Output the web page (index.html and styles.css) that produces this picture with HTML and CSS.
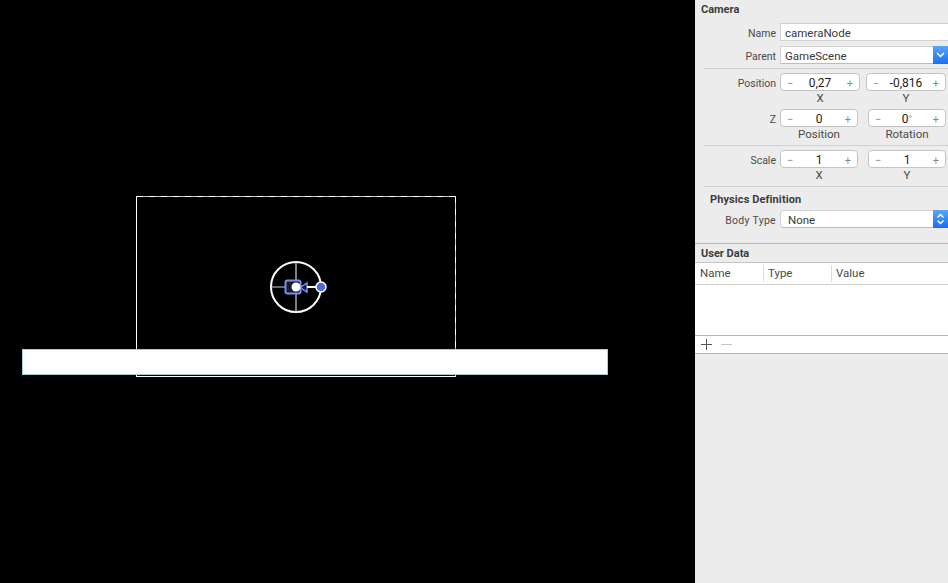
FILE: index.html
```html
<!DOCTYPE html>
<html lang="en">

<head>
  <meta charset="UTF-8" />
  <title>GameScene</title>
  <link rel="stylesheet" href="styles.css">
</head>

<body>
  <div class="scene">
    <div class="camera-frame"></div>
    <div class="ground"></div>
    <svg class="camera-node" width="66" height="60" viewBox="0 0 66 60">
      <circle cx="26" cy="26" r="25" fill="none" stroke="#fff" stroke-width="2" />
      <path d="M1 26H51M26 1V51" stroke="#d0d0d0" stroke-width="1.2" />
      <rect x="15.500" y="19.500" width="15" height="13" rx="2" fill="#1a1a2a" stroke="#7b8fe8" stroke-width="2" />
      <path d="M31 26L37 22V31L31 27Z" fill="#1a1a2a" stroke="#7b8fe8" stroke-width="1.500" />
      <path d="M37 26H46" stroke="#fff" stroke-width="2" />
      <circle cx="26" cy="26" r="4.500" fill="#fff" />
      <circle cx="51" cy="26" r="5" fill="#4f68dc" stroke="#fff" stroke-width="1.500" />
    </svg>
  </div>

  <aside class="inspector">
    <h2 class="section-title">Camera</h2>
    <div class="row row-name">
      <span class="row-label">Name</span>
      <div class="field">cameraNode</div>
    </div>
    <div class="row row-parent">
      <span class="row-label">Parent</span>
      <div class="select">
        GameScene
        <span class="select-arrow">
          <svg width="9" height="6" viewBox="0 0 9 6"><path d="M1 1L4.500 4.500L8 1" fill="none" stroke="#fff" stroke-width="1.500" /></svg>
        </span>
      </div>
    </div>

    <div class="group">
      <div class="row">
        <span class="row-label">Position</span>
        <div class="stepper wide"><i>−</i><b>0,27</b><i>+</i></div>
        <div class="stepper wide"><i>−</i><b>-0,816</b><i>+</i></div>
      </div>
      <div class="captions wide-captions"><span>X</span><span>Y</span></div>
    </div>

    <div class="group-z">
      <div class="row">
        <span class="row-label">Z</span>
        <div class="stepper"><i>−</i><b>0</b><i>+</i></div>
        <div class="stepper"><i>−</i><b>0<small>°</small></b><i>+</i></div>
      </div>
      <div class="captions"><span>Position</span><span>Rotation</span></div>
    </div>

    <div class="group">
      <div class="row">
        <span class="row-label">Scale</span>
        <div class="stepper"><i>−</i><b>1</b><i>+</i></div>
        <div class="stepper"><i>−</i><b>1</b><i>+</i></div>
      </div>
      <div class="captions"><span>X</span><span>Y</span></div>
    </div>

    <div class="group group-physics">
      <h3 class="sub-title">Physics Definition</h3>
      <div class="row">
        <span class="row-label body-type">Body Type</span>
        <div class="select select-round">
          None
          <span class="select-arrow">
            <svg width="9" height="12" viewBox="0 0 9 12"><path d="M1.500 4.500L4.500 1.500L7.500 4.500M1.500 7.500L4.500 10.500L7.500 7.500" fill="none" stroke="#fff" stroke-width="1.500" /></svg>
          </span>
        </div>
      </div>
    </div>

    <div class="user-data">
      <h2 class="section-title">User Data</h2>
      <div class="table-head">
        <span>Name</span>
        <span>Type</span>
        <span>Value</span>
      </div>
      <div class="table-body"></div>
      <div class="table-foot">
        <svg width="48" height="17" viewBox="0 0 48 17">
          <path d="M6 8.500H17M11.500 3V14" stroke="#555" stroke-width="1" />
          <path d="M26 8.500H37" stroke="#c4c4c4" stroke-width="1" />
        </svg>
      </div>
    </div>
  </aside>
</body>

</html>
```

FILE: styles.css
```css
* {
  box-sizing: border-box;
}

body {
  margin: 0;
  width: 948px;
  height: 583px;
  overflow: hidden;
  display: flex;
  font-family: 'Roboto', sans-serif;
  font-size: 10.5px;
  color: #3a3a3a;
  background-color: #ececec;
}

.scene {
  position: relative;
  width: 695px;
  height: 583px;
  background: #000;
}

.camera-frame {
  position: absolute;
  left: 136px;
  top: 196px;
  width: 320px;
  height: 181px;
  border: 1px solid #fff;
  border-top-color: #c4c4c4;
  border-right-color: #c4c4c4;
}

.camera-frame::before {
  content: '';
  position: absolute;
  left: 0;
  right: 0;
  top: -1px;
  height: 1px;
  background: repeating-linear-gradient(90deg, #fff 0 6px, transparent 6px 12px);
}

.camera-frame::after {
  content: '';
  position: absolute;
  top: 0;
  bottom: 0;
  right: -1px;
  width: 1px;
  background: repeating-linear-gradient(180deg, #fff 0 6px, transparent 6px 12px);
}

.ground {
  position: absolute;
  left: 22px;
  top: 349px;
  width: 586px;
  height: 26px;
  background: #fff;
  border: 1px solid #a5d0d0;
}

.camera-node {
  position: absolute;
  left: 270px;
  top: 261px;
}

.inspector {
  width: 253px;
  height: 583px;
  padding-top: 3px;
}

.section-title {
  margin: 0;
  padding-left: 6px;
  font-size: 11px;
  font-weight: 700;
  line-height: 13px;
  color: #3c3c3c;
}

.row {
  display: flex;
  align-items: center;
  height: 18px;
}

.row-label {
  flex: none;
  width: 85px;
  padding: 2px 4px 0 0;
  text-align: right;
  color: #4a4a4a;
}

.body-type {
  letter-spacing: 0.3px;
}

.row-name {
  margin-top: 7px;
}

.row-parent {
  margin-top: 5px;
}

.field,
.select {
  position: relative;
  flex: 1;
  height: 18px;
  padding-left: 4px;
  font-size: 11.5px;
  line-height: 18px;
  background: #fff;
  border: 1px solid #d2d2d2;
  border-right: none;
}

.select {
  border-bottom-color: #bdbdbd;
}

.select-round {
  padding-left: 7px;
  border-radius: 4px 0 0 4px;
}

.select-arrow {
  position: absolute;
  right: 0;
  top: -1px;
  width: 15px;
  height: 18px;
  display: flex;
  align-items: center;
  justify-content: center;
  background: linear-gradient(#5aa5f5, #1a6ff0);
}

.group {
  margin-top: 4px;
  margin-left: 9px;
  padding-top: 4px;
  border-top: 1px solid #d0d0d0;
}

.group .row-label {
  width: 76px;
}

.group-z {
  margin-top: 4px;
}

.group-physics {
  padding-top: 6px;
}

.stepper {
  flex: none;
  display: flex;
  align-items: center;
  justify-content: space-between;
  width: 78px;
  height: 18px;
  padding: 2px 6px 0;
  background: #fff;
  border: 1px solid #c4c4c4;
  border-radius: 4px;
}

.stepper + .stepper {
  margin-left: 10px;
}

.stepper.wide {
  width: 80px;
}

.stepper.wide + .stepper.wide {
  margin-left: 6px;
}

.stepper i {
  font-style: normal;
  color: #8a8a8a;
  font-size: 11px;
}

.stepper b {
  font-weight: 400;
  font-size: 12px;
  color: #222;
}

.stepper small {
  font-size: 10px;
  color: #999;
}

.captions {
  display: flex;
  margin-left: 85px;
  height: 14px;
  font-size: 11.5px;
  line-height: 15px;
  color: #4a4a4a;
}

.group .captions {
  margin-left: 76px;
}

.captions span {
  flex: none;
  width: 78px;
  text-align: center;
}

.captions span + span {
  margin-left: 10px;
}

.wide-captions span {
  width: 80px;
}

.wide-captions span + span {
  margin-left: 6px;
}

.sub-title {
  margin: 0 0 4px;
  padding-left: 6px;
  font-size: 11px;
  font-weight: 700;
  line-height: 13px;
  letter-spacing: 0.1px;
  color: #3c3c3c;
}

.user-data {
  margin-top: 15px;
  padding-top: 2px;
  border-top: 1px solid #b8b8b8;
}

.user-data .section-title {
  height: 16px;
  line-height: 15px;
}

.table-head {
  display: flex;
  align-items: center;
  height: 23px;
  font-size: 11.5px;
  background: #fff;
  border-top: 1px solid #c4c4c4;
  border-bottom: 1px solid #cfcfcf;
  color: #4a4a4a;
}

.table-head span {
  width: 68px;
  height: 17px;
  padding-left: 4px;
  line-height: 17px;
  border-right: 1px solid #dcdcdc;
}

.table-head span:first-child {
  width: 69px;
  padding-left: 5px;
}

.table-head span:last-child {
  border-right: none;
}

.table-body {
  height: 50px;
  background: #fff;
}

.table-foot {
  display: flex;
  height: 19px;
  background: #fff;
  border-top: 1px solid #b4b4b4;
  border-bottom: 1px solid #b4b4b4;
}
```
